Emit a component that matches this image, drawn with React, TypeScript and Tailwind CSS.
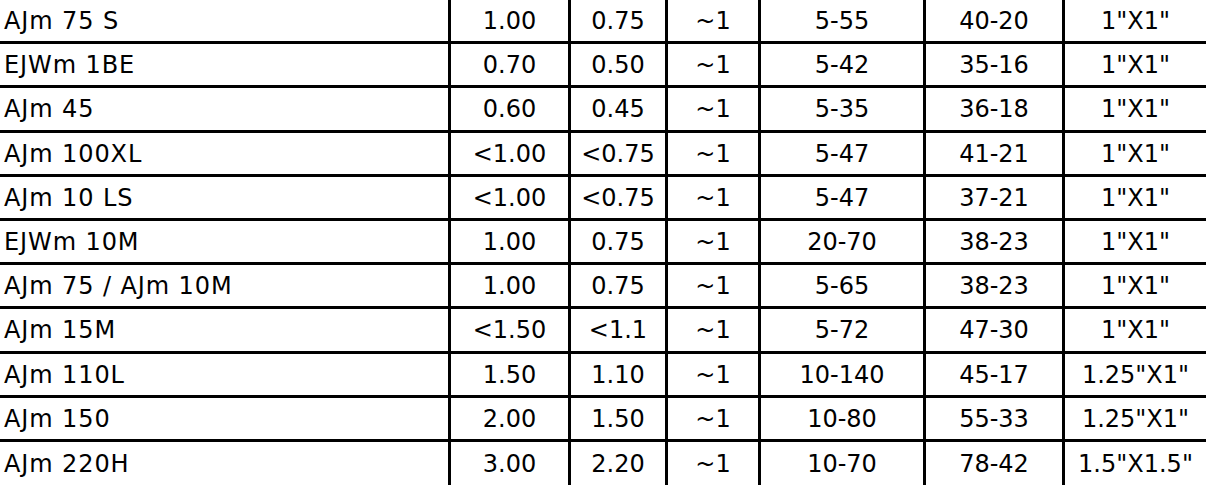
import React from 'react';

type Row = [string, string, string, string, string, string, string];

const rows: Row[] = [
  ['AJm 75 S', '1.00', '0.75', '~1', '5-55', '40-20', '1"X1"'],
  ['EJWm 1BE', '0.70', '0.50', '~1', '5-42', '35-16', '1"X1"'],
  ['AJm 45', '0.60', '0.45', '~1', '5-35', '36-18', '1"X1"'],
  ['AJm 100XL', '<1.00', '<0.75', '~1', '5-47', '41-21', '1"X1"'],
  ['AJm 10 LS', '<1.00', '<0.75', '~1', '5-47', '37-21', '1"X1"'],
  ['EJWm 10M', '1.00', '0.75', '~1', '20-70', '38-23', '1"X1"'],
  ['AJm 75 / AJm 10M', '1.00', '0.75', '~1', '5-65', '38-23', '1"X1"'],
  ['AJm 15M', '<1.50', '<1.1', '~1', '5-72', '47-30', '1"X1"'],
  ['AJm 110L', '1.50', '1.10', '~1', '10-140', '45-17', '1.25"X1"'],
  ['AJm 150', '2.00', '1.50', '~1', '10-80', '55-33', '1.25"X1"'],
  ['AJm 220H', '3.00', '2.20', '~1', '10-70', '78-42', '1.5"X1.5"'],
];

// widths of the numeric columns, left border included
const colWidths = ['w-[120px]', 'w-[97px]', 'w-[93px]', 'w-[165px]', 'w-[139px]', 'w-[144px]'];

const App = () => {
  return (
    <main className="w-[1206px] h-[485px] overflow-hidden bg-white text-black font-['DejaVu_Sans',Verdana,sans-serif] text-[24px] leading-normal">
      {rows.map((row, i) => (
        <div
          key={row[0]}
          className={
            i < rows.length - 1
              ? 'flex h-[44.2px] border-b-[3px] border-black'
              : 'flex h-[44.2px]'
          }
        >
          <div className="w-[448px] flex items-center pl-[4px] pt-[1px] tracking-[0.9px] whitespace-nowrap">
            {row[0]}
          </div>
          {row.slice(1).map((cell, j) => (
            <div
              key={j}
              className={`${colWidths[j]} flex items-center justify-center pt-[1px] border-l-[3px] border-black whitespace-nowrap`}
            >
              {cell}
            </div>
          ))}
        </div>
      ))}
    </main>
  );
};

export default App;
